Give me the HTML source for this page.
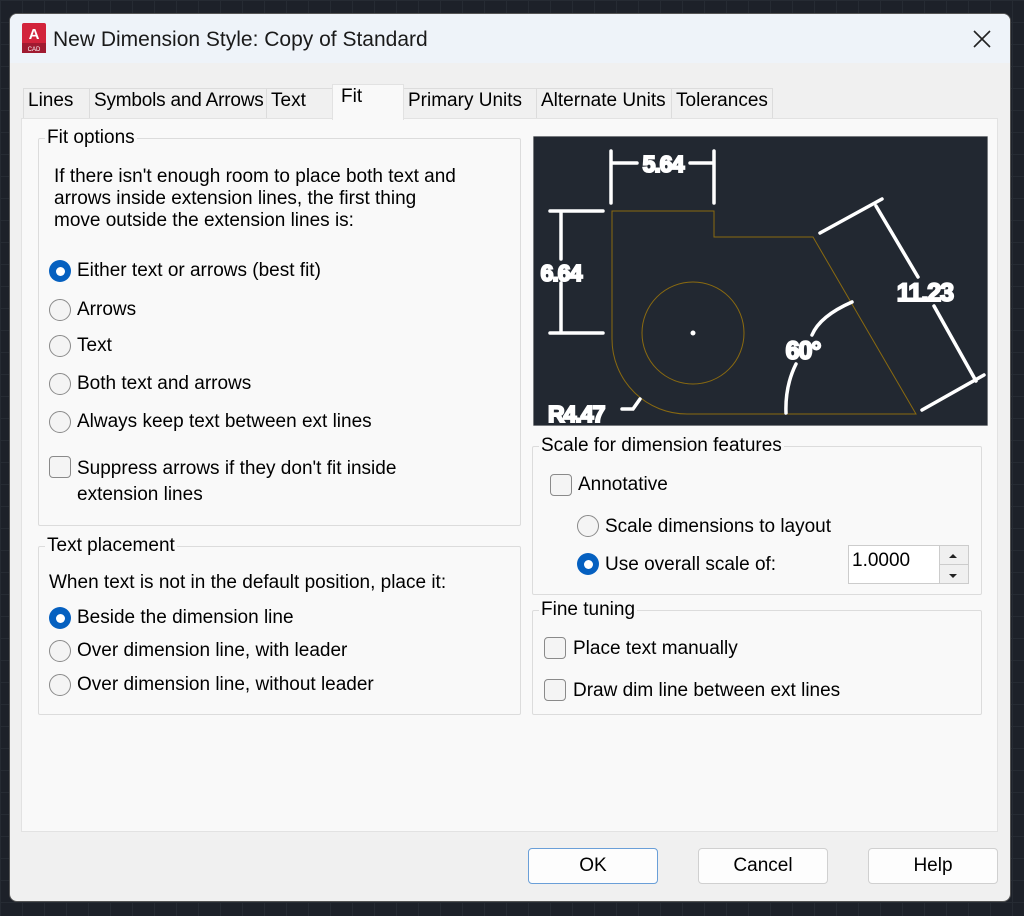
<!DOCTYPE html>
<html><head><style>
*{margin:0;padding:0;box-sizing:border-box}
body{width:1024px;height:916px;background:#1d2129;font-family:"Liberation Sans",sans-serif;font-size:19px;color:#000;position:relative;overflow:hidden;
background-image:linear-gradient(#262b33 1px,transparent 1px),linear-gradient(90deg,#262b33 1px,transparent 1px);background-size:22px 22px}
.dlg{position:absolute;left:9px;top:13px;width:1002px;height:889px;background:#f0f0f0;border-radius:8px;overflow:hidden;border:1px solid #555}
.title{position:absolute;left:0;top:0;width:100%;height:49px;background:#eef3f9}
.a{position:absolute}
.t{position:absolute;white-space:nowrap}
.tab{position:absolute;top:74px;height:31px;border:1px solid #dcdcdc;border-bottom:none;background:#f0f0f0;padding:1px 0 0 4px;white-space:nowrap;overflow:hidden}
.panel{position:absolute;left:11px;top:104px;width:977px;height:714px;background:#f9f9f9;border:1px solid #e2e2e2}
.grp{position:absolute;border:1px solid #dcdcdc;border-radius:2px}
.grp .lbl{position:absolute;top:-12px;left:6px;background:#f9f9f9;padding:0 2px;line-height:22px}
.rb{position:absolute;width:22px;height:22px;border-radius:50%;border:1.5px solid #8a8a8a;background:#f4f4f4}
.rb.on{border:none;background:#0560c0}
.rb.on::after{content:"";position:absolute;left:6.5px;top:6.5px;width:9px;height:9px;border-radius:50%;background:#fff}
.cb{position:absolute;width:22px;height:22px;border-radius:4px;border:1.5px solid #8a8a8a;background:#f4f4f4}
.btn{position:absolute;top:834px;width:130px;height:36px;background:#fdfdfd;border:1px solid #d0d0d0;border-radius:4px;text-align:center;line-height:34px}
</style></head><body>
<div class="dlg">
<div class="title"></div>
<svg class="a" style="left:12px;top:9px" width="24" height="30" viewBox="0 0 24 30"><rect x="0" y="0" width="24" height="30" rx="2" fill="#d2233b"/><rect x="0" y="20" width="24" height="10" fill="#a01a30"/><text x="12" y="16" font-size="15" font-weight="bold" fill="#fff" text-anchor="middle" font-family="Liberation Sans">A</text><text x="12" y="28" font-size="6" fill="#fff" text-anchor="middle" font-family="Liberation Sans">CAD</text></svg>
<div class="t" style="left:43px;top:14px;font-size:21px;color:#1a1a1a">New Dimension Style: Copy of Standard</div>
<svg class="a" style="left:962px;top:15px" width="20" height="20"><path d="M2 2L18 18M18 2L2 18" stroke="#222" stroke-width="1.6"/></svg>

<div class="tab" style="left:13px;width:67px">Lines</div>
<div class="tab" style="left:79px;width:178px;letter-spacing:-0.2px">Symbols and Arrows</div>
<div class="tab" style="left:256px;width:67px">Text</div>
<div class="tab" style="left:393px;width:134px">Primary Units</div>
<div class="tab" style="left:526px;width:136px">Alternate Units</div>
<div class="tab" style="left:661px;width:102px">Tolerances</div>
<div class="panel">
 <div class="grp" style="left:16px;top:19px;width:483px;height:388px"><div class="lbl">Fit options</div></div>
 <div class="grp" style="left:16px;top:427px;width:483px;height:169px"><div class="lbl">Text placement</div></div>
 <div class="grp" style="left:510px;top:327px;width:450px;height:149px"><div class="lbl">Scale for dimension features</div></div>
 <div class="grp" style="left:510px;top:491px;width:450px;height:105px"><div class="lbl">Fine tuning</div></div>
</div>
<div class="tab" style="left:322px;top:70px;width:72px;height:36px;background:#f9f9f9;border-color:#e2e2e2;padding-top:1px;padding-left:8px">Fit</div>

<div class="t" style="left:44px;top:152px;line-height:22px">If there isn't enough room to place both text and<br>arrows inside extension lines, the first thing<br>move outside the extension lines is:</div>
<div class="rb on" style="left:39px;top:246px"></div><div class="t" style="left:67px;top:246px">Either text or arrows (best fit)</div>
<div class="rb" style="left:39px;top:285px"></div><div class="t" style="left:67px;top:285px">Arrows</div>
<div class="rb" style="left:39px;top:321px"></div><div class="t" style="left:67px;top:321px">Text</div>
<div class="rb" style="left:39px;top:359px"></div><div class="t" style="left:67px;top:359px">Both text and arrows</div>
<div class="rb" style="left:39px;top:397px"></div><div class="t" style="left:67px;top:397px">Always keep text between ext lines</div>
<div class="cb" style="left:39px;top:442px"></div><div class="t" style="left:67px;top:442px;line-height:26px">Suppress arrows if they don't fit inside<br>extension lines</div>

<div class="t" style="left:39px;top:558px">When text is not in the default position, place it:</div>
<div class="rb on" style="left:39px;top:593px"></div><div class="t" style="left:67px;top:593px">Beside the dimension line</div>
<div class="rb" style="left:39px;top:626px"></div><div class="t" style="left:67px;top:626px">Over dimension line, with leader</div>
<div class="rb" style="left:39px;top:660px"></div><div class="t" style="left:67px;top:660px">Over dimension line, without leader</div>

<div class="cb" style="left:540px;top:460px"></div><div class="t" style="left:568px;top:460px">Annotative</div>
<div class="rb" style="left:567px;top:501px"></div><div class="t" style="left:595px;top:502px">Scale dimensions to layout</div>
<div class="rb on" style="left:567px;top:539px"></div><div class="t" style="left:595px;top:540px">Use overall scale of:</div>
<div class="a" style="left:838px;top:531px;width:121px;height:39px;background:#fff;border:1px solid #ccc"></div>
<div class="t" style="left:842px;top:536px">1.0000</div>
<div class="a" style="left:929px;top:532px;width:29px;height:37px;background:#f0f0f0;border-left:1px solid #ccc"></div>
<div class="a" style="left:929px;top:550px;width:29px;height:1px;background:#ccc"></div>
<svg class="a" style="left:938px;top:538px" width="10" height="28"><path d="M1 6L5 2L9 6Z M1 22L5 26L9 22Z" fill="#222"/></svg>

<div class="cb" style="left:534px;top:623px"></div><div class="t" style="left:563px;top:624px">Place text manually</div>
<div class="cb" style="left:534px;top:665px"></div><div class="t" style="left:563px;top:666px">Draw dim line between ext lines</div>

<svg class="a" style="left:523px;top:122px" width="455" height="290" viewBox="533 135 455 290">
<rect x="533" y="135" width="455" height="290" fill="#222831" stroke="#ccc"/>
<g fill="none" stroke="#8a6a10" stroke-width="1">
<path d="M612 210H714V236H813L916 413H687A75 75 0 0 1 612 338Z"/>
<circle cx="693" cy="332" r="51"/>
</g>
<circle cx="693" cy="332" r="2.5" fill="#fff"/>
<g stroke="#fff" stroke-width="3.5" fill="none" stroke-linecap="round">
<path d="M611 150V202M714 150V202M613 162H637M690 162H712"/>
<path d="M550 210H603M550 332H603M561 212V258M561 282V330"/>
<path d="M820 232L882 198M922 409L984 374M876 205L918 276M934 305L976 380"/>
<path d="M852 301Q820 315 812 334M796 363Q785 385 786 412"/>
<path d="M622 408H633L640 398"/>
</g>
<g fill="#fff" font-family="Liberation Sans" font-weight="bold" stroke="#fff" stroke-width="2" letter-spacing="-1">
<text x="663" y="171" font-size="23" text-anchor="middle">5.64</text>
<text x="561" y="280" font-size="23" text-anchor="middle">6.64</text>
<text x="925" y="300" font-size="25" text-anchor="middle">11.23</text>
<text x="803" y="358" font-size="25" text-anchor="middle">60°</text>
<text x="548" y="421" font-size="23">R4.47</text>
</g>
</svg>

<div class="btn" style="left:518px;border-color:#6a9fd8">OK</div>
<div class="btn" style="left:688px">Cancel</div>
<div class="btn" style="left:858px">Help</div>
</div>
</body></html>
